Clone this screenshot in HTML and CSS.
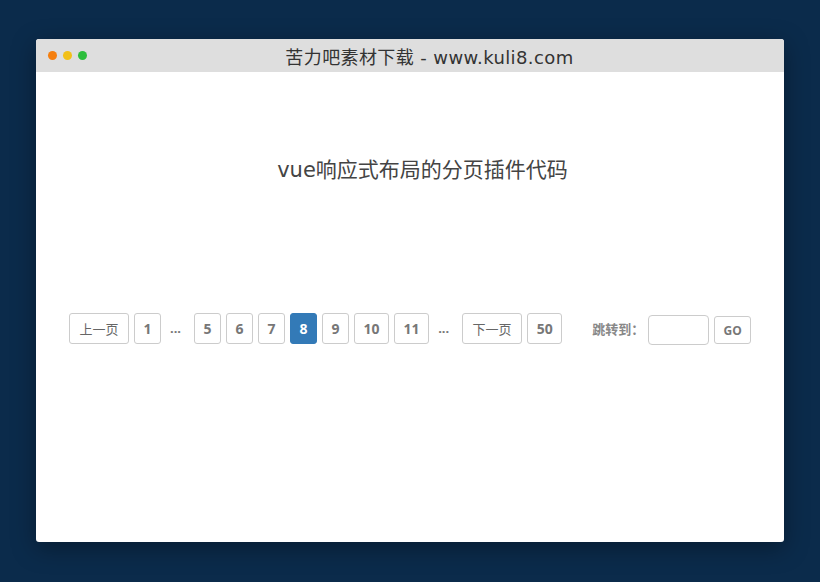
FILE: index.html
```html
<!DOCTYPE html>
<html>
<head>
<meta charset="utf-8">
<link rel="stylesheet" href="styles.css">
</head>
<body>
<div class="window">
  <div class="titlebar">
    <div class="dots">
      <span class="dot orange"></span>
      <span class="dot yellow"></span>
      <span class="dot green"></span>
    </div>
    <div class="title">苦力吧素材下载 - www.kuli8.com</div>
  </div>
  <div class="content">
    <h1 class="heading">vue响应式布局的分页插件代码</h1>
    <div class="pager">
      <a class="btn wide">上一页</a>
      <a class="btn">1</a>
      <span class="ellipsis">...</span>
      <a class="btn">5</a>
      <a class="btn">6</a>
      <a class="btn">7</a>
      <a class="btn active">8</a>
      <a class="btn">9</a>
      <a class="btn">10</a>
      <a class="btn">11</a>
      <span class="ellipsis">...</span>
      <a class="btn wide">下一页</a>
      <a class="btn">50</a>
      <span class="jump-label">跳转到：</span>
      <input class="jump-input" type="text">
      <a class="btn go">GO</a>
    </div>
  </div>
</div>
</body>
</html>
```

FILE: styles.css
```css
html, body {
  margin: 0;
  padding: 0;
}
body {
  background: #0b2b4b;
  width: 820px;
  height: 582px;
  font-family: "Noto Sans", "Noto Sans CJK SC", sans-serif;
  padding-top: 39px;
  box-sizing: border-box;
}
.window {
  margin-left: 36px;
  width: 748px;
  height: 503px;
  background: #fff;
  border-radius: 3px;
  overflow: hidden;
  box-shadow: 0 6px 24px rgba(0,0,0,0.35);
  display: flex;
  flex-direction: column;
}
.titlebar {
  height: 33px;
  background: #dedede;
  display: flex;
  align-items: center;
}
.dots {
  display: flex;
  gap: 6px;
  padding-left: 12px;
}
.dot {
  width: 9px;
  height: 9px;
  border-radius: 50%;
}
.orange { background: #f57f0f; }
.yellow { background: #f2c018; }
.green { background: #2dbe3c; }
.title {
  flex: 1;
  text-align: center;
  font-family: "DejaVu Sans", "Noto Sans CJK SC", sans-serif;
  font-size: 18px;
  color: #333;
  padding-right: 12px;
  letter-spacing: 0.4px;
}
.content {
  flex: 1;
}
.heading {
  margin: 86px 0 0 0;
  text-align: center;
  font-weight: normal;
  font-size: 21px;
  color: #444;
  line-height: 25px;
  padding-left: 25px;
  font-family: "DejaVu Sans", "Noto Sans CJK SC", sans-serif;
}
.pager {
  margin-top: 130px;
  margin-left: 33px;
  display: flex;
  align-items: flex-start;
  gap: 5px;
  height: 33px;
}
.btn {
  box-sizing: border-box;
  min-width: 27px;
  height: 31px;
  padding: 0 8.5px;
  border: 1px solid #cccccc;
  border-radius: 3px;
  display: flex;
  align-items: center;
  justify-content: center;
  font-size: 14px;
  font-weight: bold;
  color: #777;
  background: #fff;
  font-family: "Open Sans", "Noto Sans CJK SC", sans-serif;
}
.btn.wide {
  width: 60px;
  font-weight: normal;
  font-family: "Noto Sans CJK SC", sans-serif;
  font-size: 13px;
  color: #666;
}
.btn.active {
  background: #337ab7;
  border-color: #337ab7;
  color: #fff;
}
.ellipsis {
  box-sizing: border-box;
  width: 23px;
  height: 31px;
  line-height: 31px;
  padding-right: 4px;
  font-size: 13px;
  font-weight: bold;
  color: #777;
  text-align: center;
}
.jump-label {
  margin-left: 25px;
  width: 54px;
  height: 31px;
  line-height: 31px;
  font-size: 13px;
  font-weight: bold;
  color: #888;
  font-family: "Noto Sans CJK SC", sans-serif;
  white-space: nowrap;
}
.jump-input {
  box-sizing: border-box;
  width: 61px;
  height: 30px;
  border: 1px solid #ccc;
  border-radius: 4px;
  margin-top: 2px;
  margin-left: -3px;
}
.btn.go {
  width: 37px;
  min-width: 37px;
  height: 28px;
  margin-top: 3px;
  font-size: 12px;
  padding: 0;
}
```
